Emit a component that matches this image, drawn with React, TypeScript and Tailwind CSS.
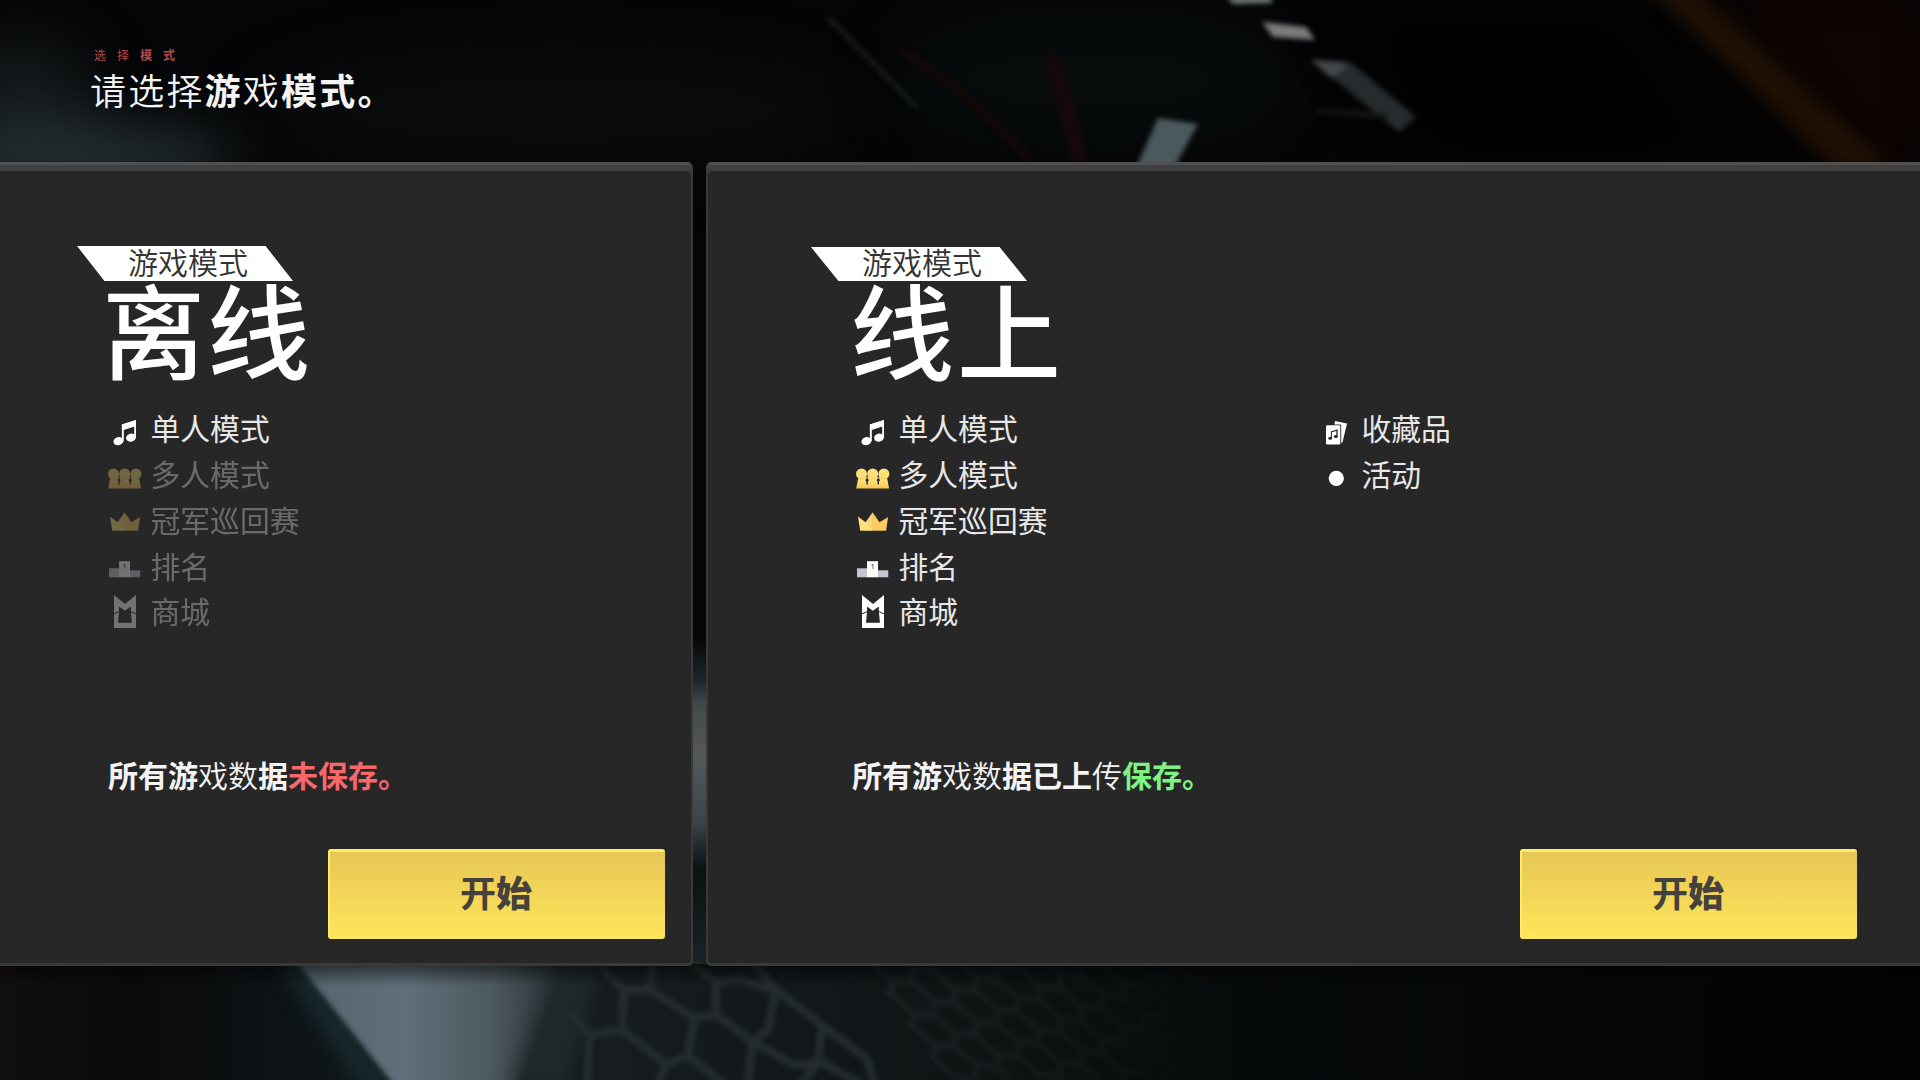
import type { ReactNode } from "react";
import clsx from "clsx";

type Piece = { text: string; className?: string };

function NoteIcon() {
  return (
    <svg width="44" height="46" viewBox="0 0 44 46" fill="#fff">
      <path d="M18.9 17.6 33 13v17.6h-1.8V19.4l-10.4 3.4v11.4h-1.9z" />
      <path d="M18.9 17.6 33 13v5.8l-14.1 4.6z" />
      <ellipse cx="15.4" cy="34.2" rx="5" ry="4" transform="rotate(-14 15.4 34.2)" />
      <ellipse cx="28" cy="30.6" rx="5" ry="4" transform="rotate(-14 28 30.6)" />
    </svg>
  );
}

function PeopleIcon() {
  return (
    <svg width="44" height="46" viewBox="0 0 44 46">
      <defs>
        <linearGradient id="people" x1="0" y1="0" x2="0" y2="1">
          <stop offset="0" stopColor="#ffe480" />
          <stop offset="1" stopColor="#fbc552" />
        </linearGradient>
      </defs>
      <path d="M5.2 35.4 7 26h29.3l1.8 9.4z" fill="url(#people)" />
      {[10.5, 21.7, 32.9].map((x) => (
        <circle key={x} cx={x} cy="20.9" r="5.5" fill="#ffdf78" />
      ))}
      <path d="M7.6 24h28.2v3H7.6z" fill="#ffd86b" />
      <path d="m16.1 24.2 1.7 3-1 1.4v2.8h-1.4v-2.8l-1-1.4zM27.3 24.2l1.7 3-1 1.4v2.8h-1.4v-2.8l-1-1.4z" fill="#272727" />
    </svg>
  );
}

function CrownIcon() {
  return (
    <svg width="44" height="46" viewBox="0 0 44 46">
      <path d="m7 18.6 7.6 5.6 7.1-9.8v18.4H9.2z" fill="#ffe27e" />
      <path d="m21.7 14.4 6.8 9.8 8.6-5.2-2 13.8H21.7z" fill="#fccb5e" />
      <path d="m15 24.2 6.7-9.8v18.4z" fill="#fdd671" />
    </svg>
  );
}

function PodiumIcon() {
  return (
    <svg width="44" height="46" viewBox="0 0 44 46">
      <path d="M6 24.3h10v9H6z" fill="#c3c5d0" />
      <path d="M27 26.3h10.3v7H27z" fill="#c3c5d0" />
      <path d="M16 17.2h11v16.1H16z" fill="#fff" />
      <text x="21.6" y="25.4" textAnchor="middle" fontSize="7.5" fill="#222" className="font-['Noto_Sans',sans-serif]">
        1
      </text>
    </svg>
  );
}

function ShopIcon() {
  return (
    <svg width="44" height="46" viewBox="0 0 44 46">
      <path d="m11 4.9 11 9.2 11-9.2V38H11z" fill="#fff" />
      <path d="m16 16.4 5.9 4.4 5.9-4.4.1 5.4 1 11H15l1-11z" fill="#272727" />
      <path d="m10.6 24 6-2.6M33.4 24l-6-2.6" stroke="#272727" strokeWidth="1" />
    </svg>
  );
}

function CardsIcon() {
  return (
    <svg width="44" height="46" viewBox="0 0 44 46">
      <path d="m21 14 12 2.6-4.6 19.2-1.2-.3V18.4q0-1-1.2-1H20.4z" fill="#fff" />
      <rect x="12" y="18.2" width="14.3" height="19.2" rx="1.2" fill="#fff" />
      <path d="m17 25 6-1.8v6.2" stroke="#272727" strokeWidth="1.3" fill="none" />
      <path d="M17.4 24.6v6.6" stroke="#272727" strokeWidth="1" />
      <ellipse cx="16.2" cy="31.2" rx="1.9" ry="1.5" fill="#272727" />
      <ellipse cx="21.8" cy="29.6" rx="1.9" ry="1.5" fill="#272727" />
    </svg>
  );
}

function DotIcon() {
  return (
    <svg width="44" height="46" viewBox="0 0 44 46">
      <circle cx="22.3" cy="25.3" r="7.6" fill="#fff" />
    </svg>
  );
}

function Feature({ icon, label, disabled = false }: { icon: ReactNode; label: string; disabled?: boolean }) {
  return (
    <li className={clsx("flex h-[45.7px] items-center gap-[3.5px]", disabled && "opacity-35")}>
      {icon}
      <span className="pb-[3px] text-[29.8px] leading-none font-normal text-[#e8e8e8]">{label}</span>
    </li>
  );
}

function Pieces({ items }: { items: Piece[] }) {
  return items.map((p) => (
    <span key={p.text} className={p.className}>
      {p.text}
    </span>
  ));
}

function Tag({ className }: { className: string }) {
  return (
    <div
      className={clsx(
        "flex w-[216px] items-center justify-center bg-white pl-[6px] text-[30px] leading-none font-[350] text-[#333] [clip-path:polygon(0_0,87.3%_0,100%_100%,12.7%_100%)]",
        className,
      )}
    >
      游戏模式
    </div>
  );
}

function StartButton() {
  return (
    <button className="flex h-[90px] w-[337px] items-center justify-center rounded-[3px] border-t-[3px] border-l-2 border-[#ffec66] bg-linear-to-b from-[#e6c655] to-[#ffe65c] pr-[3px] pb-[9px] text-[36px] leading-none text-[#45413c]">
      <span className="font-bold">开</span>
      <span className="font-black">始</span>
    </button>
  );
}

function Backdrop() {
  return (
    <svg className="absolute inset-0 -z-10" width="1920" height="1080" viewBox="0 0 1920 1080" colorInterpolationFilters="sRGB">
      <defs>
        <filter id="soft" x="-20%" y="-20%" width="140%" height="140%">
          <feGaussianBlur stdDeviation="2.6" />
        </filter>
        <filter id="softer" x="-50%" y="-50%" width="200%" height="200%">
          <feGaussianBlur stdDeviation="9" />
        </filter>
        <filter id="haze" x="-100%" y="-100%" width="300%" height="300%">
          <feGaussianBlur stdDeviation="28" />
        </filter>
        <linearGradient id="beam" x1="290" y1="0" x2="580" y2="0" gradientUnits="userSpaceOnUse">
          <stop offset="0" stopColor="#54636d" />
          <stop offset="0.4" stopColor="#5f6e78" />
          <stop offset="0.7" stopColor="#4c585f" />
          <stop offset="1" stopColor="#20282b" />
        </linearGradient>
        <linearGradient id="slit" x1="0" y1="640" x2="0" y2="966" gradientUnits="userSpaceOnUse">
          <stop offset="0" stopColor="#060809" />
          <stop offset="0.12" stopColor="#1d2529" />
          <stop offset="0.2" stopColor="#43484b" />
          <stop offset="0.36" stopColor="#54585b" />
          <stop offset="0.56" stopColor="#39444b" />
          <stop offset="0.7" stopColor="#0c1113" />
          <stop offset="1" stopColor="#1b2225" />
        </linearGradient>
        <linearGradient id="floor" x1="0" y1="0" x2="1920" y2="0" gradientUnits="userSpaceOnUse">
          <stop offset="0" stopColor="#110e0e" />
          <stop offset="0.07" stopColor="#0a0a0a" />
          <stop offset="0.16" stopColor="#0e1417" />
          <stop offset="0.32" stopColor="#161c1f" />
          <stop offset="0.5" stopColor="#0f1415" />
          <stop offset="0.65" stopColor="#070a0a" />
          <stop offset="1" stopColor="#020202" />
        </linearGradient>
        <linearGradient id="meshFade" x1="840" y1="0" x2="1190" y2="0" gradientUnits="userSpaceOnUse">
          <stop offset="0" stopColor="#fff" />
          <stop offset="1" stopColor="#000" />
        </linearGradient>
        <mask id="meshMask">
          <path d="M850 940h400v140H945z" fill="url(#meshFade)" />
        </mask>
        <pattern id="mesh" width="42" height="44" patternUnits="userSpaceOnUse" patternTransform="translate(850 960) skewY(26)">
          <path d="M0 0v14l21 8v14L0 44M42 0v14L21 22M21 36l21 8" fill="none" stroke="#1e2426" strokeWidth="6" />
        </pattern>
        <linearGradient id="edge" x1="0" y1="966" x2="0" y2="986" gradientUnits="userSpaceOnUse">
          <stop offset="0" stopOpacity="0.5" />
          <stop offset="1" stopOpacity="0" />
        </linearGradient>
      </defs>

      <path d="M0 0h1920v1080H0z" fill="#040506" />

      {/* header glow */}
      <ellipse cx="20" cy="110" rx="80" ry="70" fill="#14191b" filter="url(#haze)" />
      <ellipse cx="90" cy="155" rx="150" ry="26" fill="#2b363b" filter="url(#haze)" />
      <ellipse cx="560" cy="110" rx="300" ry="60" fill="#090b0c" filter="url(#haze)" />
      <ellipse cx="1090" cy="80" rx="200" ry="70" fill="#070b0c" filter="url(#haze)" />
      <path d="M1340 0h280l120 170h-320z" fill="#010101" filter="url(#haze)" />

      {/* streaks */}
      <g filter="url(#soft)">
        <path d="m824 16 8 2 88 90-4 1z" fill="#1b2020" />
        <path d="M900 50q60 34 132 112" stroke="#120807" strokeWidth="9" fill="none" />
        <path d="M1042 56h20l28 106h-18z" fill="#13090a" />
        <path d="M1225-6h44l4 9-40 1z" fill="#6d7674" />
        <path d="m1262 22 44 5 9 13-42-3z" fill="#7c7a7b" />
        <path d="m1311 60 39 2 66 55-17 15z" fill="#262b2d" />
        <path d="m1311 60 32 2 4 6-16 10z" fill="#43474b" />
        <path d="m1316 108 72 5-4 6-66-6z" fill="#121617" />
        <path d="m1158 118 40 6-24 44h-38z" fill="#4b595e" />
      </g>
      <path d="M1700-30 1930-10v180h-70z" fill="#0e0402" filter="url(#haze)" />
      <path d="M1640-20h44l210 190h-54z" fill="#211004" filter="url(#softer)" />

      <path d="M690 640h20v326h-20z" fill="url(#slit)" />

      {/* floor */}
      <path d="M0 964h1920v116H0z" fill="url(#floor)" />
      <path d="M270 950h40l90 140h-40z" fill="#17272b" filter="url(#softer)" />
      <path d="M545 950h50l-30 130h-70z" fill="#20282b" filter="url(#softer)" />
      <path d="M295 960h270l-50 130H398z" fill="url(#beam)" filter="url(#soft)" />
      <path d="M560 950h44l-40 140h-58z" fill="#20282b" opacity="0.8" filter="url(#softer)" />
      <g fill="none" stroke="#252c2f" strokeWidth="8" strokeLinejoin="round" filter="url(#soft)">
        <path d="m600 966 24 24h26l3-26M624 990l-2 40-32 5-21-22M590 1035l-3 48M650 990l44 28-6 38-22 8-44-34M666 1064l-8 20M688 1056l36 28" />
        <path d="m694 1018 22-3v-32l-24-20M716 983l22-4 38 12M754 964l22 26-8 40-16 11-36-26M752 1041l-4 44M776 990l46 35-4 38-24 2-42-24M818 1063l-18 22M818 1060l46 26M822 1025l46 35 6 24" />
      </g>
      <path d="M850 940h400v140H900z" fill="url(#mesh)" mask="url(#meshMask)" filter="url(#soft)" />
      <path d="M0 964h1920v26H0z" fill="url(#edge)" />
    </svg>
  );
}

const panel = "border-[#383a3a] border-b-[3px] bg-[#272727] shadow-[inset_0_3px_0_#505050,inset_0_9px_0_#404040]";

export default function App() {
  return (
    <div className="relative isolate flex h-[1080px] w-[1920px] flex-col overflow-hidden font-['Noto_Sans_CJK_SC',sans-serif] text-white">
      <Backdrop />

      <header className="h-[162px] pt-[48px] pl-[90px]">
        <p className="pl-1 text-[12px] leading-[13px] tracking-[11px] text-[#b54a4c]">
          <Pieces items={[{ text: "选择", className: "font-normal" }, { text: "模式", className: "font-bold" }]} />
        </p>
        <h1 className="mt-[10px] text-[36px] leading-[36px] tracking-[2.2px] text-[#f4f4f4]">
          <Pieces
            items={[
              { text: "请选择", className: "font-[350]" },
              { text: "游", className: "font-bold" },
              { text: "戏", className: "font-[350]" },
              { text: "模式。", className: "font-bold" },
            ]}
          />
        </h1>
      </header>

      <main className="flex h-[804px] gap-[13px]">
        <section className={clsx(panel, "flex w-[693px] flex-col rounded-r-[5px] border-r-2 pt-[84px]")}>
          <div className="ml-[77px]">
            <Tag className="h-[35px] pb-[6px]" />
          </div>
          <h2 className="-mt-[3px] ml-[102px] h-[129px] text-[103px] leading-[100px] font-medium tracking-[2px]">离线</h2>
          <ul className="ml-[103px]">
            <Feature icon={<NoteIcon />} label="单人模式" />
            <Feature icon={<PeopleIcon />} label="多人模式" disabled />
            <Feature icon={<CrownIcon />} label="冠军巡回赛" disabled />
            <Feature icon={<PodiumIcon />} label="排名" disabled />
            <Feature icon={<ShopIcon />} label="商城" disabled />
          </ul>
          <p className="mt-[124px] ml-[108px] text-[30px] leading-[30px] text-[#f4f4f4]">
            <Pieces
              items={[
                { text: "所有游", className: "font-bold" },
                { text: "戏数", className: "font-[350]" },
                { text: "据", className: "font-bold" },
                { text: "未保存。", className: "font-bold text-[#f8676a]" },
              ]}
            />
          </p>
          <div className="mt-auto mr-[26px] mb-6 flex justify-end">
            <StartButton />
          </div>
        </section>

        <section className={clsx(panel, "flex flex-1 flex-col rounded-l-[5px] border-l-2 pt-[84px]")}>
          <div className="ml-[103px]">
            <Tag className="mt-px h-[34px] pb-[7px]" />
          </div>
          <h2 className="-mt-[3px] ml-[142px] h-[129px] text-[104px] leading-[99px] font-medium tracking-[3px]">线上</h2>
          <div className="ml-[143px] flex">
            <ul className="w-[463px]">
              <Feature icon={<NoteIcon />} label="单人模式" />
              <Feature icon={<PeopleIcon />} label="多人模式" />
              <Feature icon={<CrownIcon />} label="冠军巡回赛" />
              <Feature icon={<PodiumIcon />} label="排名" />
              <Feature icon={<ShopIcon />} label="商城" />
            </ul>
            <ul>
              <Feature icon={<CardsIcon />} label="收藏品" />
              <Feature icon={<DotIcon />} label="活动" />
            </ul>
          </div>
          <p className="mt-[124px] ml-[144px] text-[30px] leading-[30px] text-[#f4f4f4]">
            <Pieces
              items={[
                { text: "所有游", className: "font-bold" },
                { text: "戏数", className: "font-[350]" },
                { text: "据已上", className: "font-bold" },
                { text: "传", className: "font-[350]" },
                { text: "保存。", className: "font-bold text-[#7ef283]" },
              ]}
            />
          </p>
          <div className="mt-auto mr-[63px] mb-6 flex justify-end">
            <StartButton />
          </div>
        </section>
      </main>
    </div>
  );
}
